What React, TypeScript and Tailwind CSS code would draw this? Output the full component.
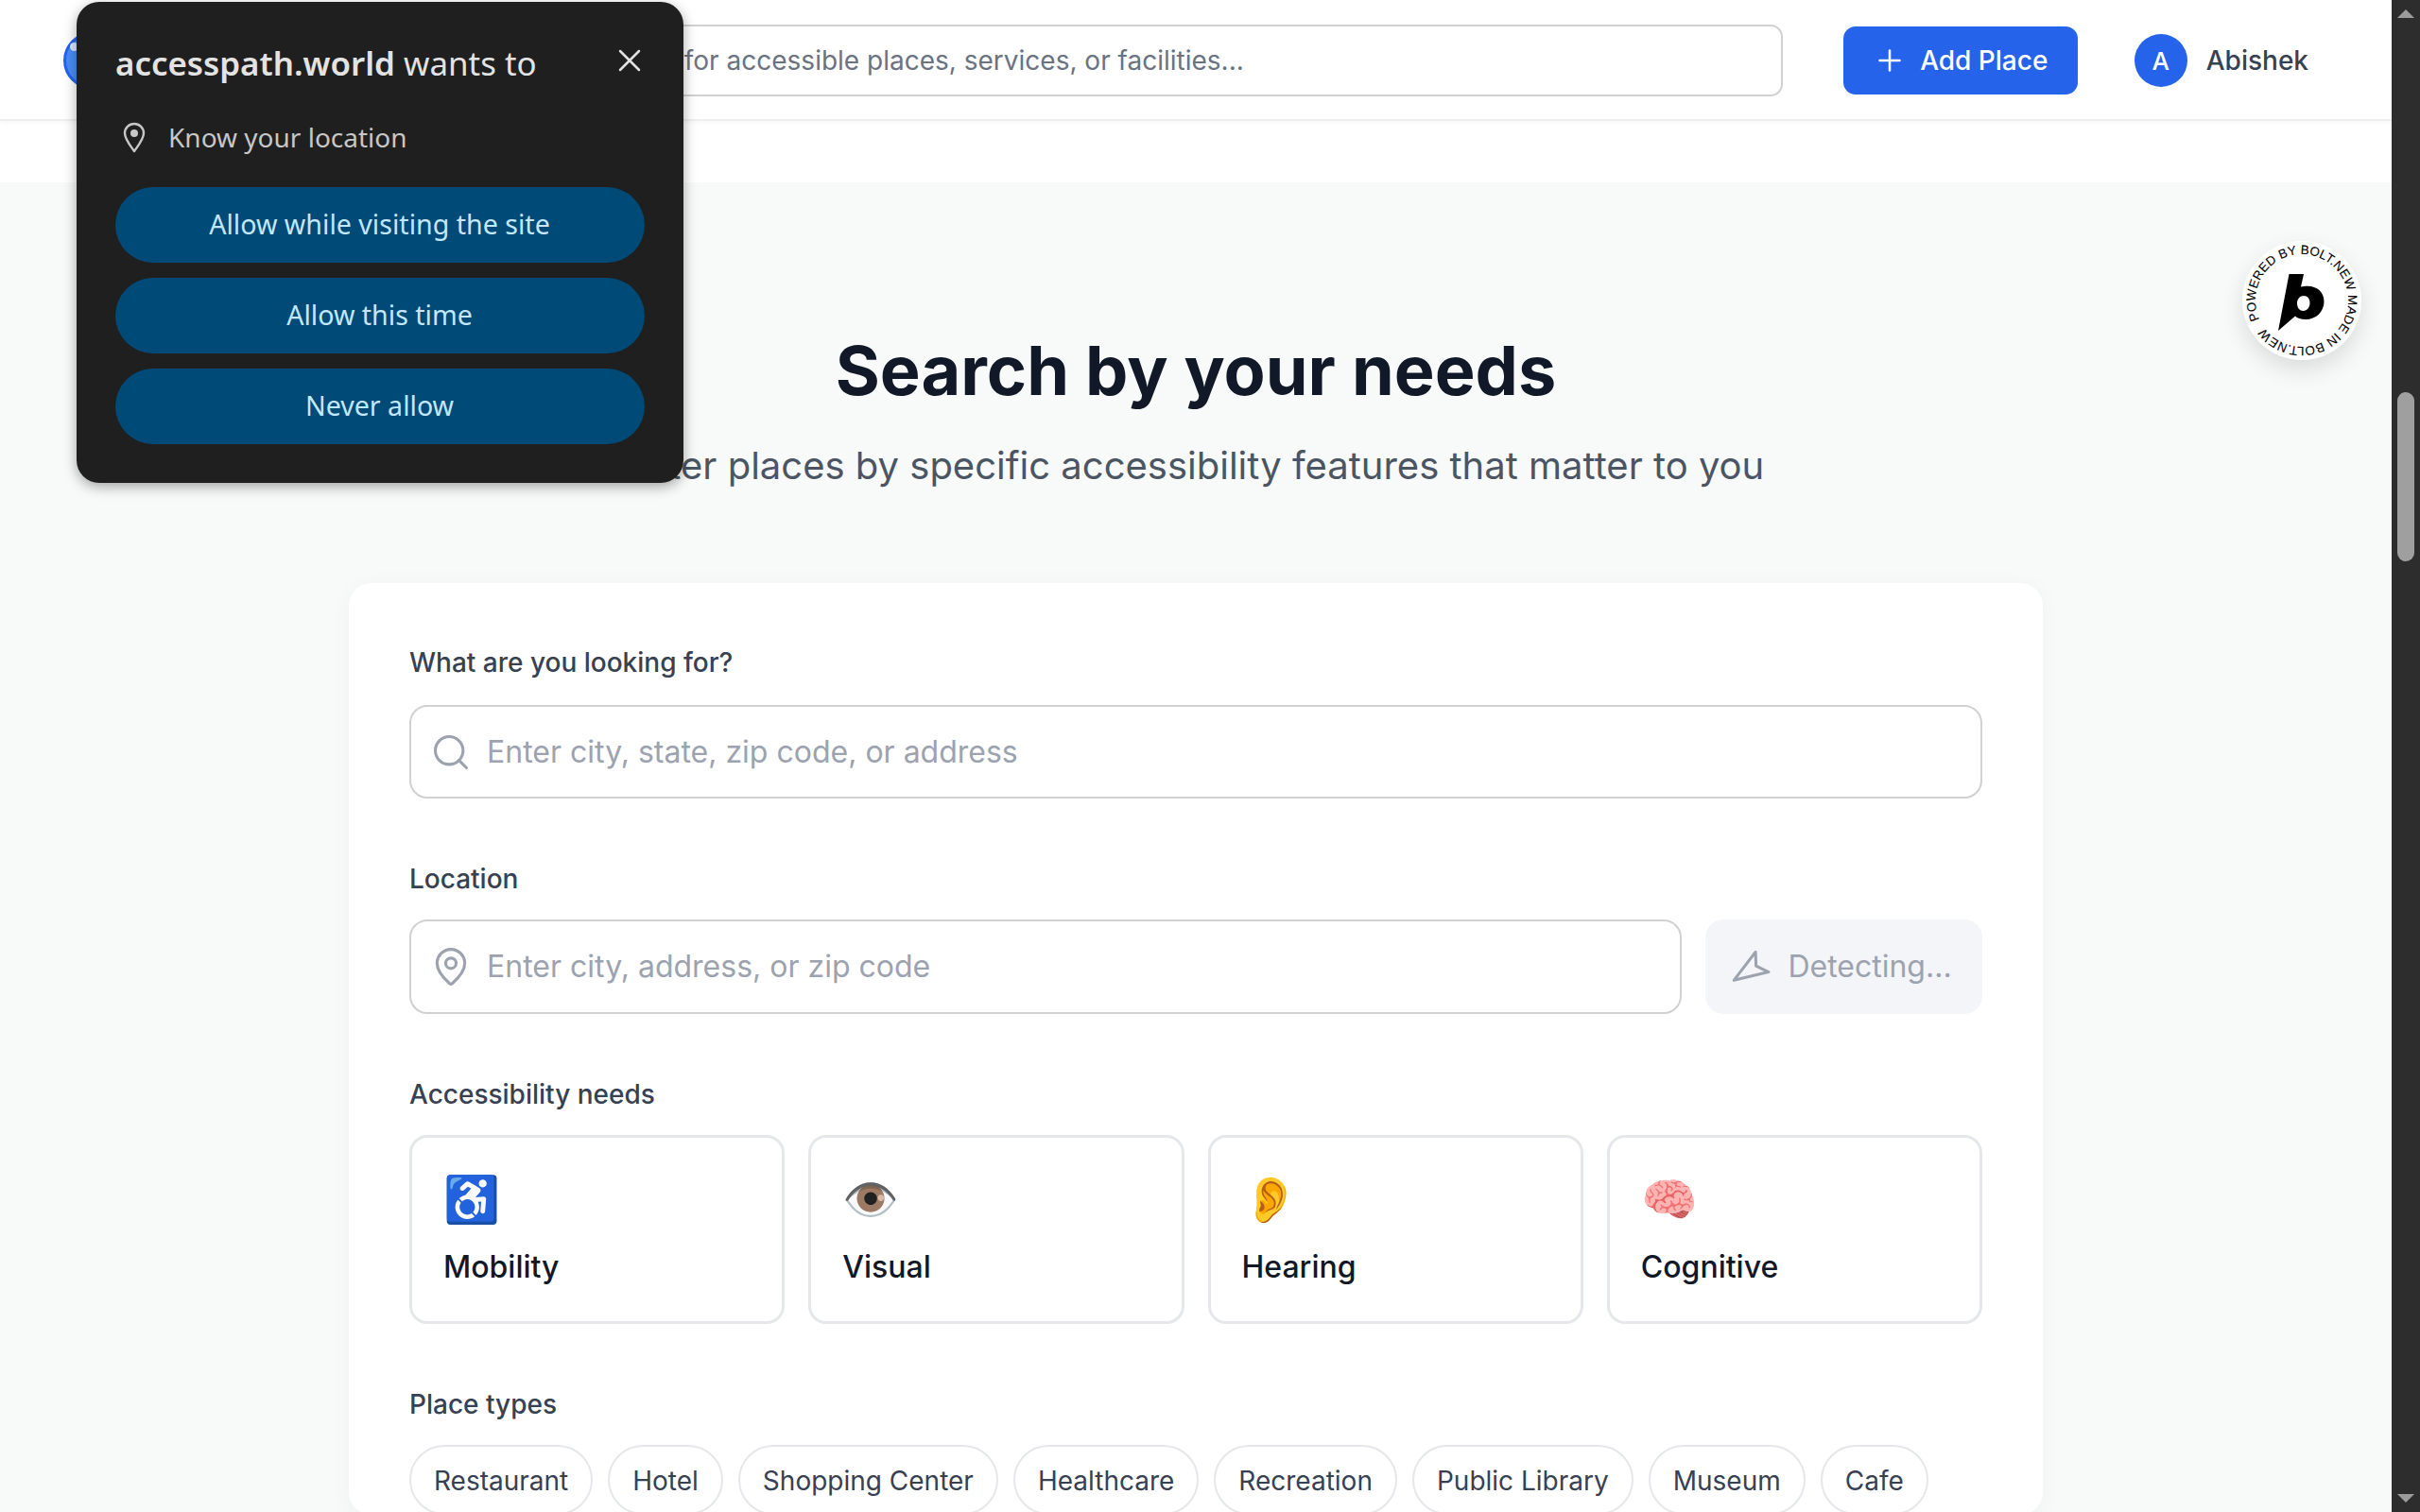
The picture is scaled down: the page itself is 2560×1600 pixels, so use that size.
import React from "react";
import { Search, MapPin, Navigation, Plus, X } from "lucide-react";

const inter = { fontFamily: "Inter, 'Liberation Sans', sans-serif" };
const needs = [
  { e: "♿", n: "Mobility" },
  { e: "👁️", n: "Visual" },
  { e: "👂", n: "Hearing" },
  { e: "🧠", n: "Cognitive" },
];
const types = ["Restaurant", "Hotel", "Shopping Center", "Healthcare", "Recreation", "Public Library", "Museum", "Cafe"];

function Badge() {
  const r = 49;
  const a = (246 * Math.PI) / 180;
  const sx = 63 + r * Math.sin(a);
  const sy = 63 - r * Math.cos(a);
  const ex = 63 + r * Math.sin(a - 0.001);
  const ey = 63 - r * Math.cos(a - 0.001);
  return (
    <div className="absolute left-[2372px] top-[255px] w-[126px] h-[126px] rounded-full bg-white shadow-[0_10px_24px_rgba(0,0,0,0.12)]">
      <svg width="126" height="126" viewBox="0 0 126 126">
        <defs>
          <path id="ring" d={`M ${sx} ${sy} A ${r} ${r} 0 1 1 ${ex} ${ey}`} />
        </defs>
        <text fontFamily="'Liberation Sans', sans-serif" fontSize="13.4" letterSpacing="0.12" fill="#000" stroke="#000" strokeWidth="0.1">
          <textPath href="#ring">POWERED BY BOLT.NEW MADE IN BOLT.NEW</textPath>
        </text>
        <path
          fillRule="evenodd"
          d="M49.5 35 L65 35 L62 48.5 C64 48 66 47.8 69 47.8 C79 47.8 86.5 54 86.5 64 C86.5 75 78 83 67 83 C62 83 58 81.5 56 79.5 L38 95 Z M65 58 C61 58 58 61.5 58 66 C58 71 61 74 64.5 74 C68.5 74 71.5 70 71.5 65.5 C71.5 61 69 58 65 58 Z"
          fill="#000"
        />
      </svg>
    </div>
  );
}

function ChromePin() {
  return (
    <svg width="24" height="33" viewBox="0 0 24 33" className="ml-[8px] mr-[24px] shrink-0" fill="none">
      <path d="M12 31 C7 24 2 18 2 12 A10 10 0 0 1 22 12 C22 18 17 24 12 31 Z" stroke="#c7c7c7" strokeWidth="2.4" strokeLinejoin="round" />
      <circle cx="12" cy="12" r="4" fill="#c7c7c7" />
    </svg>
  );
}

function PermissionPopup() {
  const btn = "h-[80px] w-full rounded-[40px] bg-[#004a77] text-[#c2e7ff] text-[28.6px] pb-[2px] pr-[1px] flex items-center justify-center";
  return (
    <div
      className="absolute left-[81px] top-[2px] w-[642px] h-[509px] rounded-[24px] bg-[#1f1f1f] px-[41px] shadow-[0_4px_14px_rgba(0,0,0,0.35)]"
      style={{ fontFamily: "'Noto Sans', sans-serif" }}
    >
      <div className="flex items-center justify-between h-[130px]">
        <div className="text-[34.9px] text-[#e3e3e3] whitespace-nowrap">
          <span className="font-semibold">accesspath.world</span> wants to
        </div>
        <X className="w-[40px] h-[40px] text-[#e3e3e3] mr-[-4px] mb-[6px]" strokeWidth={1.5} />
      </div>
      <div className="flex items-center h-[26px] text-[28px] text-[#c7c7c7] whitespace-nowrap">
        <ChromePin />
        Know your location
      </div>
      <div className="flex flex-col gap-[16px] mt-[40px]">
        <div className={btn}>Allow while visiting the site</div>
        <div className={btn}>Allow this time</div>
        <div className={btn}>Never allow</div>
      </div>
    </div>
  );
}

function Label({ children, first }: { children: React.ReactNode; first?: boolean }) {
  return (
    <div className={first ? "text-[28px] leading-[36px] font-medium text-[#374151] mb-[27px]" : "text-[28px] leading-[36px] font-medium text-[#374151] mb-[25px]"}>
      {children}
    </div>
  );
}

export default function App() {
  return (
    <div className="flex h-screen w-full overflow-hidden bg-white" style={inter}>
      <div className="relative flex-1 min-w-0 flex flex-col overflow-hidden">
        <header className="relative h-[128px] shrink-0 flex items-center pl-[67px] pr-[88px] pt-[2px] border-b-2 border-[#eeeff0] bg-white shadow-[0_2px_4px_rgba(0,0,0,0.03)]">
          <div className="w-[60px] h-[60px] rounded-full bg-[#4a8df6] border-[3px] border-[#2563eb] shrink-0 relative">
            <div className="absolute left-[4px] top-[8px] w-[9px] h-[9px] rounded-full bg-[#dbe9ff]" />
          </div>
          <div className="ml-[430px] flex-1 h-[76px] rounded-[13px] border-2 border-[#d0d1d3] flex items-center overflow-hidden">
            <span className="text-[28px] text-[#6b7280] pl-[64px] whitespace-nowrap">Search for accessible places, services, or facilities...</span>
          </div>
          <button className="ml-[64px] w-[248px] h-[72px] rounded-[13px] bg-[#2563eb] text-white text-[28px] font-medium flex items-center justify-center gap-[14px]">
            <Plus className="w-[36px] h-[36px]" strokeWidth={1.7} />
            Add Place
          </button>
          <div className="ml-[60px] w-[56px] h-[56px] rounded-full bg-[#2563eb] text-white text-[26px] font-medium flex items-center justify-center">A</div>
          <div className="ml-[20px] text-[28px] font-medium text-[#374151]">Abishek</div>
        </header>
        <div className="h-[65px] shrink-0 bg-white" />
        <main className="flex-1 bg-[#f8fafa] flex flex-col items-center pt-[159px]">
          <h1 className="text-[72px] leading-[80px] font-bold text-[#111827] whitespace-nowrap">Search by your needs</h1>
          <p className="mt-[37px] text-[40px] leading-[48px] text-[#4b5563] whitespace-nowrap">Filter places by specific accessibility features that matter to you</p>
          <section className="mt-[100px] w-[1792px] shrink-0 bg-white rounded-[24px] shadow-[0_4px_24px_rgba(0,0,0,0.04)] px-[64px] pt-[66px]">
            <div className="flex flex-col gap-[67px]">
              <div>
                <Label first>What are you looking for?</Label>
                <div className="h-[99px] rounded-[19px] border-2 border-[#d0d1d3] flex items-center pl-[20px]">
                  <Search className="w-[44px] h-[44px] text-[#9ca3af]" strokeWidth={1.7} />
                  <span className="ml-[16px] text-[32px] text-[#9ca3af]">Enter city, state, zip code, or address</span>
                </div>
              </div>
              <div>
                <Label>Location</Label>
                <div className="flex gap-[25px]">
                  <div className="flex-1 h-[100px] rounded-[19px] border-2 border-[#d0d1d3] flex items-center pl-[20px]">
                    <MapPin className="w-[44px] h-[44px] text-[#9ca3af]" strokeWidth={1.7} />
                    <span className="ml-[16px] text-[32px] text-[#9ca3af]">Enter city, address, or zip code</span>
                  </div>
                  <div className="w-[293px] h-[100px] rounded-[19px] bg-[#f4f5f8] flex items-center justify-center gap-[14px] pr-[2px] text-[32px] text-[#9ca3af]">
                    <Navigation className="w-[43px] h-[43px] rotate-[192deg]" strokeWidth={1.7} />
                    Detecting...
                  </div>
                </div>
              </div>
              <div>
                <Label>Accessibility needs</Label>
                <div className="grid grid-cols-4 gap-[25px]">
                  {needs.map((x) => (
                    <div key={x.n} className="h-[200px] rounded-[19px] border-[3.5px] border-[#e5e7eb] px-[33px] pt-[29px]">
                      <div className="h-[72px] text-[48px] leading-[72px]">{x.e}</div>
                      <div className="mt-[12px] text-[32px] font-medium text-[#111827]">{x.n}</div>
                    </div>
                  ))}
                </div>
              </div>
              <div>
                <Label>Place types</Label>
                <div className="flex gap-[16px]">
                  {types.map((t) => (
                    <div key={t} className="h-[74px] px-[24px] pt-[1px] rounded-full border-2 border-[#e5e7eb] flex items-center text-[28px] text-[#374151] whitespace-nowrap">{t}</div>
                  ))}
                </div>
              </div>
            </div>
          </section>
        </main>
        <PermissionPopup />
        <Badge />
      </div>
      <aside className="w-[30px] shrink-0 bg-[#2d2d2d] flex flex-col items-center justify-between relative">
        <div className="w-0 h-0 mt-[10px] border-x-[9px] border-x-transparent border-b-[9px] border-b-[#9b9b9b]" />
        <div className="absolute left-[6px] top-[415px] w-[18px] h-[179px] rounded-[9px] bg-[#9f9f9f]" />
        <div className="w-0 h-0 mb-[10px] border-x-[9px] border-x-transparent border-t-[9px] border-t-[#9b9b9b]" />
      </aside>
    </div>
  );
}
